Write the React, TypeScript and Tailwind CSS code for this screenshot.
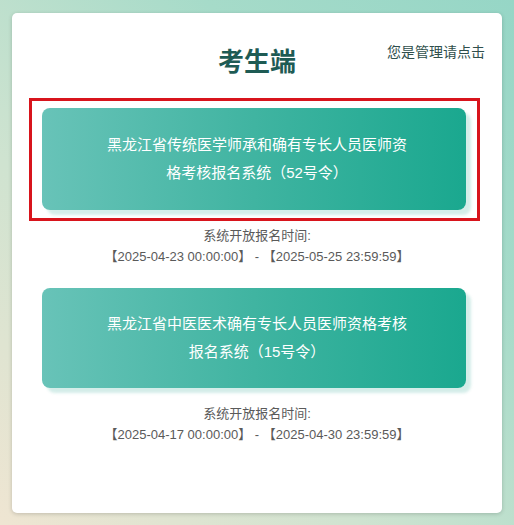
import React from "react";

interface ExamSystem {
  title: string;
  start: string;
  end: string;
  selected: boolean;
  height: string;
}

const SYSTEMS: ExamSystem[] = [
  {
    title: "黑龙江省传统医学师承和确有专长人员医师资格考核报名系统（52号令）",
    start: "2025-04-23 00:00:00",
    end: "2025-05-25 23:59:59",
    selected: true,
    height: "h-[102px]",
  },
  {
    title: "黑龙江省中医医术确有专长人员医师资格考核报名系统（15号令）",
    start: "2025-04-17 00:00:00",
    end: "2025-04-30 23:59:59",
    selected: false,
    height: "h-[100px]",
  },
];

const SystemEntry = ({ system }: { system: ExamSystem }) => (
  <div className="flex flex-col">
    <div
      className={
        "w-[451px] border-[3px] px-[10px] pt-[7px] pb-[8px] " +
        (system.selected ? "border-[#d8141c]" : "border-transparent")
      }
    >
      <button
        className={
          "flex w-[424px] cursor-pointer items-center justify-center rounded-[8px] bg-[linear-gradient(to_right,#68c3b8,#40b4a1_50%,#1aa88f)] pr-[52px] pl-[58px] text-center text-[15px] leading-[28px] text-white shadow-[5px_5px_3px_rgba(60,175,155,0.22)] " +
          system.height
        }
      >
        {system.title}
      </button>
    </div>
    <div className="mt-[4px] text-center text-[13px] leading-[21px] text-[#5a5a5a]">
      <p>系统开放报名时间:</p>
      <p>
        【{system.start}】 - 【{system.end}】
      </p>
    </div>
  </div>
);

export default function App() {
  return (
    <div className="h-[525px] w-full bg-[linear-gradient(to_top_right,#efe5d2,#cfe3d0_35%,#a6dbc9_70%,#96d6c6)] px-[12px] pt-[13px] font-['Liberation_Sans','Noto_Sans_CJK_SC',sans-serif]">
      <div className="h-[500px] rounded-[5px] bg-white px-[17px] pt-[29px] shadow-[0_1px_4px_rgba(0,0,0,0.18)]">
        <div className="grid grid-cols-[1fr_auto_1fr] items-start">
          <div />
          <h1 className="mt-[3px] text-[26px] leading-[34px] font-bold text-[#1e5b54]">考生端</h1>
          <a className="cursor-pointer justify-self-end text-[14px] leading-[20px] text-[#2f4f4c]">
            您是管理请点击
          </a>
        </div>
        <div className="mt-[19px] flex flex-col gap-[11px]">
          {SYSTEMS.map((system) => (
            <SystemEntry key={system.title} system={system} />
          ))}
        </div>
      </div>
    </div>
  );
}
